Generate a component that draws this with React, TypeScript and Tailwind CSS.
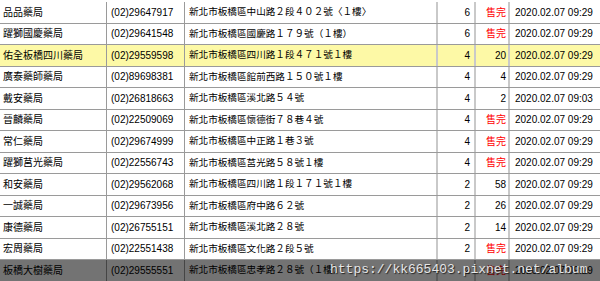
import React from "react";

type Row = {
  name: string;
  phone: string;
  address: string;
  adult: string;
  child: string;
  time: string;
  highlight?: boolean;
};

const rows: Row[] = [
  { name: "品品藥局", phone: "(02)29647917", address: "新北市板橋區中山路２段４０２號〈１樓〉", adult: "6", child: "售完", time: "2020.02.07 09:29" },
  { name: "躍獅國慶藥局", phone: "(02)29641548", address: "新北市板橋區國慶路１７９號（１樓）", adult: "6", child: "售完", time: "2020.02.07 09:29" },
  { name: "佑全板橋四川藥局", phone: "(02)29559598", address: "新北市板橋區四川路１段４７１號１樓", adult: "4", child: "20", time: "2020.02.07 09:29", highlight: true },
  { name: "廣泰藥師藥局", phone: "(02)89698381", address: "新北市板橋區館前西路１５０號１樓", adult: "4", child: "4", time: "2020.02.07 09:29" },
  { name: "戴安藥局", phone: "(02)26818663", address: "新北市板橋區溪北路５４號", adult: "4", child: "2", time: "2020.02.07 09:03" },
  { name: "晉麟藥局", phone: "(02)22509069", address: "新北市板橋區懷德街７８巷４號", adult: "4", child: "售完", time: "2020.02.07 09:29" },
  { name: "常仁藥局", phone: "(02)29674999", address: "新北市板橋區中正路１巷３號", adult: "4", child: "售完", time: "2020.02.07 09:29" },
  { name: "躍獅莒光藥局", phone: "(02)22556743", address: "新北市板橋區莒光路５８號１樓", adult: "4", child: "售完", time: "2020.02.07 09:29" },
  { name: "和安藥局", phone: "(02)29562068", address: "新北市板橋區四川路１段１７１號１樓", adult: "2", child: "58", time: "2020.02.07 09:29" },
  { name: "一誠藥局", phone: "(02)29673956", address: "新北市板橋區府中路６２號", adult: "2", child: "26", time: "2020.02.07 09:29" },
  { name: "康德藥局", phone: "(02)26755151", address: "新北市板橋區溪北路２８號", adult: "2", child: "14", time: "2020.02.07 09:29" },
  { name: "宏周藥局", phone: "(02)22551438", address: "新北市板橋區文化路２段５號", adult: "2", child: "售完", time: "2020.02.07 09:29" },
  { name: "板橋大樹藥局", phone: "(02)29555551", address: "新北市板橋區忠孝路２８號（１樓）", adult: "2", child: "售完", time: "2020.02.07 09:29" },
];

const TableRow: React.FC<{ row: Row }> = ({ row }) => {
  const bg = row.highlight ? "bg-[#fdf9a6]" : "bg-white";
  const soldOut = row.child === "售完";
  return (
    <div className={`grid grid-cols-[107px_78px_253px_38px_34px_90px] h-[21.5px] border-b border-[#9a9a9a] ${bg}`}>
      <div className="flex items-center pl-[3px] border-r border-[#9a9a9a] whitespace-nowrap overflow-hidden">{row.name}</div>
      <div className="flex items-center pl-[4px] border-r border-[#9a9a9a] whitespace-nowrap">{row.phone}</div>
      <div className="flex items-center pl-[4px] text-[9.6px] border-r-2 border-[#c9c9c9] whitespace-nowrap overflow-hidden">{row.address}</div>
      <div className="flex items-center justify-end pr-[4px] border-r-2 border-[#c9c9c9]">{row.adult}</div>
      <div className={`flex items-center justify-end pr-[2px] border-r-2 border-[#c9c9c9] ${soldOut ? "text-[#ff0000]" : ""}`}>{row.child}</div>
      <div className="flex items-center pl-[5px] whitespace-nowrap">{row.time}</div>
    </div>
  );
};

export default function App() {
  return (
    <div className="relative w-[600px] h-[281px] overflow-hidden bg-white text-black text-[10px] font-['Liberation_Sans','Noto_Sans_CJK_TC',sans-serif]">
      <div className="pt-[2px]">
        {rows.map((r) => (
          <TableRow key={r.name} row={r} />
        ))}
      </div>
      <div className="absolute left-0 right-0 top-[260px] h-[21px] bg-black/55">
        <span className="absolute left-[330px] top-[1px] text-[13px] leading-[18px] text-[#e6e6e6] font-['Liberation_Mono',monospace] [text-shadow:1px_1px_1px_#222]">
          https://kk665403.pixnet.net/album
        </span>
      </div>
    </div>
  );
}
